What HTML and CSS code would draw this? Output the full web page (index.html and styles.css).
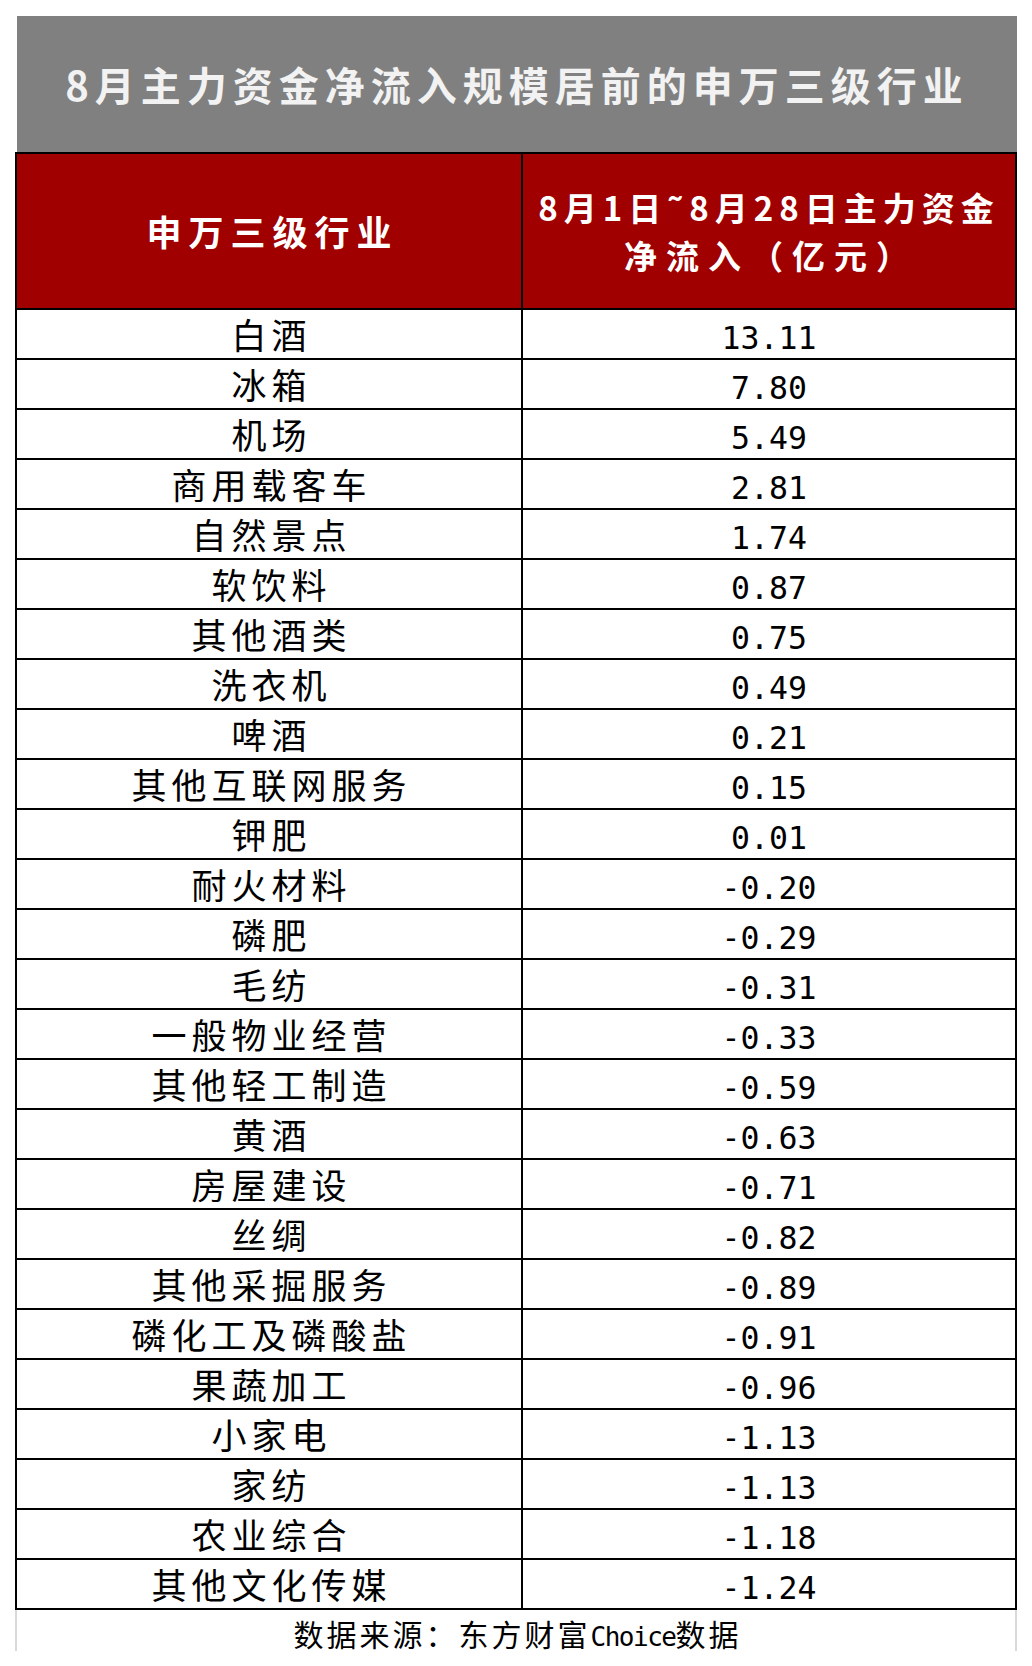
FILE: index.html
```html
<!DOCTYPE html>
<html lang="zh-CN">
<head>
<meta charset="utf-8">
<title>8月主力资金净流入规模居前的申万三级行业</title>
<link rel="stylesheet" href="styles.css">
</head>
<body>
<div class="sheet">
  <div class="title">8月主力资金净流入规模居前的申万三级行业</div>
  <div class="grid">
    <div class="row head">
      <div class="cell name">申万三级行业</div>
      <div class="cell value"><span class="line">8月1日˜8月28日主力资金</span><span class="line unit">净流入（亿元）</span></div>
    </div>
    <div class="row"><div class="cell name">白酒</div><div class="cell num">13.11</div></div>
    <div class="row"><div class="cell name">冰箱</div><div class="cell num">7.80</div></div>
    <div class="row"><div class="cell name">机场</div><div class="cell num">5.49</div></div>
    <div class="row"><div class="cell name">商用载客车</div><div class="cell num">2.81</div></div>
    <div class="row"><div class="cell name">自然景点</div><div class="cell num">1.74</div></div>
    <div class="row"><div class="cell name">软饮料</div><div class="cell num">0.87</div></div>
    <div class="row"><div class="cell name">其他酒类</div><div class="cell num">0.75</div></div>
    <div class="row"><div class="cell name">洗衣机</div><div class="cell num">0.49</div></div>
    <div class="row"><div class="cell name">啤酒</div><div class="cell num">0.21</div></div>
    <div class="row"><div class="cell name">其他互联网服务</div><div class="cell num">0.15</div></div>
    <div class="row"><div class="cell name">钾肥</div><div class="cell num">0.01</div></div>
    <div class="row"><div class="cell name">耐火材料</div><div class="cell num">-0.20</div></div>
    <div class="row"><div class="cell name">磷肥</div><div class="cell num">-0.29</div></div>
    <div class="row"><div class="cell name">毛纺</div><div class="cell num">-0.31</div></div>
    <div class="row"><div class="cell name">一般物业经营</div><div class="cell num">-0.33</div></div>
    <div class="row"><div class="cell name">其他轻工制造</div><div class="cell num">-0.59</div></div>
    <div class="row"><div class="cell name">黄酒</div><div class="cell num">-0.63</div></div>
    <div class="row"><div class="cell name">房屋建设</div><div class="cell num">-0.71</div></div>
    <div class="row"><div class="cell name">丝绸</div><div class="cell num">-0.82</div></div>
    <div class="row"><div class="cell name">其他采掘服务</div><div class="cell num">-0.89</div></div>
    <div class="row"><div class="cell name">磷化工及磷酸盐</div><div class="cell num">-0.91</div></div>
    <div class="row"><div class="cell name">果蔬加工</div><div class="cell num">-0.96</div></div>
    <div class="row"><div class="cell name">小家电</div><div class="cell num">-1.13</div></div>
    <div class="row"><div class="cell name">家纺</div><div class="cell num">-1.13</div></div>
    <div class="row"><div class="cell name">农业综合</div><div class="cell num">-1.18</div></div>
    <div class="row"><div class="cell name">其他文化传媒</div><div class="cell num">-1.24</div></div>
  </div>
  <div class="source">数据来源：东方财富<span class="latin">Choice</span>数据</div>
</div>
</body>
</html>
```
FILE: styles.css
```css
html, body {
  margin: 0;
  padding: 0;
  background: #ffffff;
}

body {
  font-family: "Noto Sans CJK SC", "Noto Sans", "DejaVu Sans", sans-serif;
  color: #000000;
}

.sheet {
  padding-top: 16px;
  width: 1032px;
}

.title {
  margin-left: 17px;
  width: 1000px;
  height: 136px;
  background: #808080;
  color: #f2f2f2;
  font-size: 40px;
  font-weight: 700;
  letter-spacing: 6px;
  line-height: 136px;
  text-align: center;
  white-space: nowrap;
}

.grid {
  margin-left: 15px;
  width: 1002px;
  box-sizing: border-box;
  border: 2px solid #000000;
}

.row {
  display: grid;
  grid-template-columns: 506px 1fr;
  height: 48px;
  border-top: 2px solid #000000;
}

.row.head {
  height: 154px;
  border-top: 0;
  background: #a00000;
  color: #ffffff;
}

.cell {
  display: flex;
  justify-content: center;
  align-items: flex-start;
  text-align: center;
  white-space: nowrap;
  overflow: visible;
}

.row .cell:first-child {
  box-sizing: border-box;
  border-right: 2px solid #000000;
}

.name {
  font-size: 35px;
  line-height: 48px;
  letter-spacing: 5px;
  padding-left: 5px;
}

.num {
  font-family: "DejaVu Sans Mono", "Liberation Mono", monospace;
  font-size: 31.5px;
  line-height: 56px;
  height: 48px;
}

.head .cell {
  align-items: center;
  font-weight: 700;
}

.head .name {
  font-size: 35px;
  line-height: 154px;
  letter-spacing: 7px;
  padding-left: 7px;
}

.head .value {
  flex-direction: column;
  font-size: 33px;
  line-height: 48px;
  letter-spacing: 6px;
}

.head .value .line {
  display: block;
}

.head .value .unit {
  letter-spacing: 9px;
  padding-left: 4px;
}

.source {
  margin-left: 15px;
  width: 1002px;
  height: 41px;
  box-sizing: border-box;
  border-left: 2px solid #d9d9d9;
  border-right: 2px solid #d9d9d9;
  padding-top: 5px;
  padding-left: 3px;
  font-size: 30px;
  line-height: 36px;
  letter-spacing: 3px;
  text-align: center;
  white-space: nowrap;
}

.latin {
  font-family: "DejaVu Sans Mono", "Liberation Mono", monospace;
  font-size: 26px;
  letter-spacing: -1.5px;
}
```
